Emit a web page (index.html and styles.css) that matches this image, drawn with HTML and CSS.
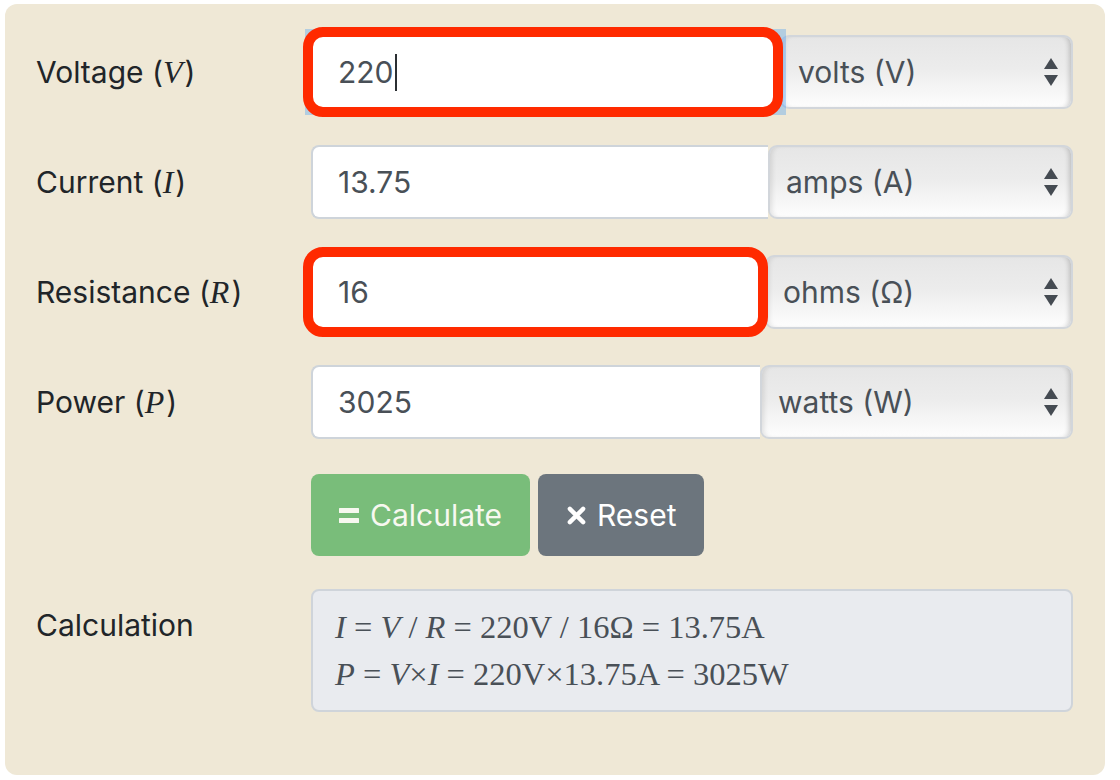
FILE: index.html
```html
<!DOCTYPE html>
<html lang="en">
<head>
<meta charset="utf-8">
<title>Ohm's law calculator</title>
<link rel="stylesheet" href="styles.css">
</head>
<body>
<form class="panel">
  <label class="label">Voltage (<i>V</i>)</label>
  <div class="group">
    <div class="annot">
      <div class="field is-focused"><span>220</span><span class="caret"></span></div>
    </div>
    <div class="select sel-volts"><span>volts (V)</span>
      <svg class="arrows" viewBox="0 0 14 28" width="14" height="28"><polygon points="7,0 14,11 0,11"/><polygon points="0,17 14,17 7,28"/></svg>
    </div>
  </div>

  <label class="label">Current (<i>I</i>)</label>
  <div class="group">
    <div class="field"><span>13.75</span></div>
    <div class="select sel-amps"><span>amps (A)</span>
      <svg class="arrows" viewBox="0 0 14 28" width="14" height="28"><polygon points="7,0 14,11 0,11"/><polygon points="0,17 14,17 7,28"/></svg>
    </div>
  </div>

  <label class="label">Resistance (<i>R</i>)</label>
  <div class="group">
    <div class="annot">
      <div class="field"><span>16</span></div>
    </div>
    <div class="select sel-ohms"><span>ohms (Ω)</span>
      <svg class="arrows" viewBox="0 0 14 28" width="14" height="28"><polygon points="7,0 14,11 0,11"/><polygon points="0,17 14,17 7,28"/></svg>
    </div>
  </div>

  <label class="label">Power (<i>P</i>)</label>
  <div class="group">
    <div class="field"><span>3025</span></div>
    <div class="select sel-watts"><span>watts (W)</span>
      <svg class="arrows" viewBox="0 0 14 28" width="14" height="28"><polygon points="7,0 14,11 0,11"/><polygon points="0,17 14,17 7,28"/></svg>
    </div>
  </div>

  <div class="spacer"></div>
  <div class="actions">
    <button type="button" class="btn btn-calc">
      <svg class="ico" viewBox="0 0 20 16" width="20" height="16"><rect x="0" y="1" width="20" height="5" rx="0.5"/><rect x="0" y="11" width="20" height="5" rx="0.5"/></svg>
      <span>Calculate</span>
    </button>
    <button type="button" class="btn btn-reset">
      <svg class="ico" viewBox="0 0 20 20" width="19" height="19"><path d="M3 3 L17 17 M17 3 L3 17" stroke="#fff" stroke-width="4.6" stroke-linecap="round" fill="none"/></svg>
      <span>Reset</span>
    </button>
  </div>

  <label class="label label-calc">Calculation</label>
  <div class="calc">
    <div class="line"><i>I</i> = <i>V</i> / <i>R</i> = 220V / 16Ω = 13.75A</div>
    <div class="line"><i>P</i> = <i>V</i>×<i>I</i> = 220V×13.75A = 3025W</div>
  </div>
</form>
</body>
</html>
```

FILE: styles.css
```css
* { box-sizing: border-box; }

html, body {
  margin: 0;
  background: #ffffff;
}

body {
  padding: 4px 15px 0 5px;
  font-family: "Inter", "Liberation Sans", Arial, sans-serif;
}

.panel {
  background: #efe8d6;
  border-radius: 12px;
  padding: 31px 32px 63px 31px;
  display: grid;
  grid-template-columns: 275px 1fr;
  grid-auto-rows: auto;
  row-gap: 36px;
  align-items: center;
}

.label {
  font-size: 30px;
  color: #212529;
  line-height: 1;
}

.label i {
  font-family: "Liberation Serif", "Times New Roman", serif;
  font-style: italic;
  font-size: 32px;
  padding-right: 2px;
}

.label-calc {
  align-self: start;
  padding-top: 21px;
  margin-top: -3px;
}

.group {
  display: flex;
  height: 74px;
  align-items: stretch;
}

.annot {
  position: relative;
  flex: 1;
  display: flex;
}

.annot::after {
  content: "";
  position: absolute;
  top: -8px;
  right: -3px;
  bottom: -8px;
  left: -8px;
  border: 10px solid #ff2a00;
  border-radius: 20px;
  pointer-events: none;
  z-index: 3;
}

.field {
  flex: 1;
  display: flex;
  align-items: center;
  background: #ffffff;
  border: 2px solid #ced4da;
  border-right: none;
  border-radius: 8px 0 0 8px;
  padding: 0 25px;
  font-size: 30px;
  color: #495057;
}

.field.is-focused {
  position: relative;
  z-index: 2;
  border: 2px solid #80bdff;
  box-shadow: 0 0 0 6px rgba(0, 123, 255, 0.25);
  border-radius: 0;
}

.caret {
  display: inline-block;
  width: 2px;
  height: 37px;
  background: #2b2f33;
  margin-left: 1px;
}

.select {
  position: relative;
  display: flex;
  align-items: center;
  justify-content: space-between;
  padding: 0 13px 0 16px;
  font-size: 30px;
  color: #495057;
  border: 2px solid #d2d6db;
  border-radius: 9px;
  background: linear-gradient(#e6e6e6 0%, #ececec 45%, #f4f4f4 70%, #fdfdfd 100%);
  box-shadow: inset -5px 0 5px -3px rgba(0, 0, 0, 0.18), inset 5px 0 5px -3px rgba(0, 0, 0, 0.10);
}

.sel-volts { width: 293px; }
.sel-amps { width: 305px; }
.sel-ohms { width: 308px; }
.sel-watts { width: 313px; }

.arrows {
  fill: #454b52;
  flex: none;
}

.actions {
  display: flex;
  gap: 8px;
  margin-top: -1px;
}

.btn {
  height: 82px;
  border: none;
  border-radius: 8px;
  display: flex;
  align-items: center;
  gap: 11px;
  font-family: "Inter", "Liberation Sans", Arial, sans-serif;
  font-size: 30px;
  color: #ffffff;
  cursor: pointer;
}

.btn-calc {
  width: 219px;
  padding: 0 0 0 28px;
  background: #79bd7a;
  color: #f7f8f0;
}

.btn-calc .ico { fill: #f7f8f0; }

.btn-reset {
  width: 166px;
  padding: 0 0 0 29px;
  background: #6c757d;
}

.calc {
  margin-top: -3px;
  background: #e9ebef;
  border: 2px solid #cfd4da;
  border-radius: 8px;
  padding: 13px 22px 12px;
  font-family: "Liberation Serif", "Times New Roman", serif;
  font-size: 32.5px;
  line-height: 47px;
  color: #495057;
}

.calc i { font-style: italic; }
```
